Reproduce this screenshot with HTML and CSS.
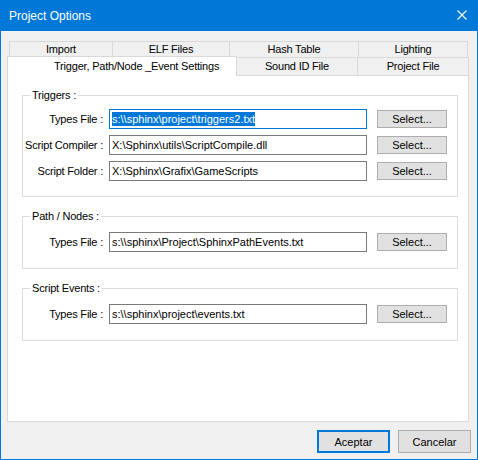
FILE: index.html
```html
<!DOCTYPE html>
<html>
<head>
<meta charset="utf-8">
<title>Project Options</title>
<link rel="stylesheet" href="styles.css">
</head>
<body>
<div class="window">
  <div class="titlebar">
    <span class="title">Project Options</span>
    <span class="close">
      <svg width="10" height="10" viewBox="0 0 10 10"><path d="M0.5 0.5 L9.5 9.5 M9.5 0.5 L0.5 9.5" stroke="#ffffff" stroke-width="1.1" fill="none"/></svg>
    </span>
  </div>
  <div class="content">
    <div class="tabs">
      <div class="tabrow top">
        <div class="tab t-import">Import</div>
        <div class="tab t-elf">ELF Files</div>
        <div class="tab t-hash">Hash Table</div>
        <div class="tab t-light">Lighting</div>
      </div>
      <div class="tabrow bottom">
        <div class="tab active">Trigger, Path/Node _Event Settings</div>
        <div class="tab t-sound">Sound ID File</div>
        <div class="tab t-project">Project File</div>
      </div>
    </div>
    <div class="panel">
      <div class="group triggers">
        <div class="legend">Triggers :</div>
        <div class="row">
          <span class="label">Types File :</span>
          <div class="input focused"><span class="sel">s:\\sphinx\project\triggers2.txt</span></div>
          <button class="select">Select...</button>
        </div>
        <div class="row">
          <span class="label">Script Compiler :</span>
          <div class="input">X:\Sphinx\utils\ScriptCompile.dll</div>
          <button class="select">Select...</button>
        </div>
        <div class="row">
          <span class="label">Script Folder :</span>
          <div class="input">X:\Sphinx\Grafix\GameScripts</div>
          <button class="select">Select...</button>
        </div>
      </div>
      <div class="group single">
        <div class="legend">Path / Nodes :</div>
        <div class="row">
          <span class="label">Types File :</span>
          <div class="input">s:\\sphinx\Project\SphinxPathEvents.txt</div>
          <button class="select">Select...</button>
        </div>
      </div>
      <div class="group single">
        <div class="legend">Script Events :</div>
        <div class="row">
          <span class="label">Types File :</span>
          <div class="input">s:\\sphinx\project\events.txt</div>
          <button class="select">Select...</button>
        </div>
      </div>
    </div>
    <div class="footer">
      <button class="btn default">Aceptar</button>
      <button class="btn">Cancelar</button>
    </div>
  </div>
</div>
</body>
</html>
```
FILE: styles.css
```css
html, body {
  margin: 0;
  padding: 0;
  background: #f0f0f0;
}
body {
  font-family: "Liberation Sans", Arial, sans-serif;
  font-size: 11px;
  color: #000;
}
.window {
  width: 478px;
  height: 460px;
  box-sizing: border-box;
  border: 1px solid #0078d7;
  border-top: 0;
  background: #f0f0f0;
  display: flex;
  flex-direction: column;
}
.titlebar {
  height: 31px;
  background: #0078d7;
  color: #fff;
  display: flex;
  align-items: center;
  justify-content: space-between;
  padding: 0 10px 0 8px;
  flex: none;
}
.title {
  font-size: 12px;
  line-height: 14px;
}
.close {
  display: flex;
  width: 10px;
  height: 10px;
  margin-top: -1px;
}
.content {
  flex: 1;
  display: flex;
  flex-direction: column;
}
.tabs {
  margin-top: 10px;
}
.tabrow {
  display: flex;
}
.tabrow.top {
  margin-left: 8px;
  height: 16px;
}
.tabrow.bottom {
  margin-left: 6px;
  height: 18px;
}
.tab {
  box-sizing: border-box;
  border-top: 1px solid #d9d9d9;
  border-left: 1px solid #d9d9d9;
  background: #f0f0f0;
  text-align: center;
  letter-spacing: -0.2px;
  white-space: nowrap;
}
.tabrow.top .tab {
  height: 16px;
  line-height: 15px;
}
.tabrow.bottom .tab {
  height: 18px;
  line-height: 17px;
}
.t-import { width: 103px; }
.t-elf { width: 117px; }
.t-hash { width: 129px; }
.t-light { width: 110px; border-right: 1px solid #d9d9d9; }
.tabrow.bottom .tab.active {
  width: 230px;
  height: 20px;
  margin: -1px 0 -1px 0;
  line-height: 19px;
  background: #fff;
  border-right: 1px solid #d9d9d9;
  text-align: left;
  padding-left: 46px;
  position: relative;
  z-index: 1;
}
.tabrow.bottom .t-sound { width: 120px; border-left: 0; }
.t-project { width: 112px; border-right: 1px solid #d9d9d9; }
.panel {
  box-sizing: border-box;
  width: 462px;
  height: 347px;
  margin-left: 6px;
  background: #fff;
  border: 1px solid #d9d9d9;
  padding: 19px 10px 0 14px;
}
.group {
  border: 1px solid #dcdcdc;
  padding: 0 0 15px 0;
}
.group + .group {
  margin-top: 19px;
}
.legend {
  display: table;
  margin: -7px 0 0 7px;
  padding: 0 2px;
  background: #fff;
  line-height: 13px;
  letter-spacing: -0.2px;
}
.row {
  display: flex;
  align-items: center;
  height: 20px;
  margin-top: 6px;
}
.legend + .row {
  margin-top: 7px;
}
.group.single {
  padding-bottom: 16px;
}
.group.single .legend + .row {
  margin-top: 9px;
}
.label {
  width: 80px;
  text-align: right;
  white-space: nowrap;
  letter-spacing: -0.2px;
  margin-right: 6px;
}
.input {
  box-sizing: border-box;
  width: 258px;
  height: 20px;
  border: 1px solid #7a7a7a;
  background: #fff;
  padding: 0 2px;
  line-height: 18px;
  white-space: nowrap;
  overflow: hidden;
}
.input.focused {
  border-color: #0078d7;
}
.sel {
  background: #0078d7;
  color: #fff;
  padding: 1px 0;
}
.select {
  box-sizing: border-box;
  width: 70px;
  height: 18px;
  margin-left: 10px;
  border: 1px solid #adadad;
  background: #e1e1e1;
  font-family: inherit;
  font-size: 11px;
  color: #000;
  padding: 0;
  line-height: 16px;
}
.footer {
  display: flex;
  justify-content: flex-end;
  gap: 8px;
  padding: 8px 6px 0 0;
}
.btn {
  box-sizing: border-box;
  width: 73px;
  height: 23px;
  border: 1px solid #adadad;
  background: #e1e1e1;
  font-family: inherit;
  font-size: 11px;
  color: #000;
  padding: 0;
}
.btn.default {
  border: 2px solid #0078d7;
}
```
